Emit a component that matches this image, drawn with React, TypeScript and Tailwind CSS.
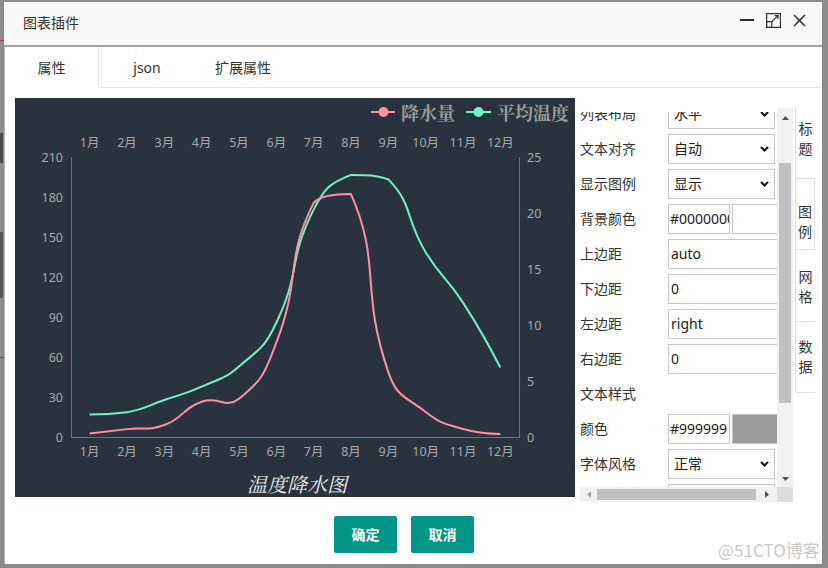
import React from 'react';

type P = [number, number];

const MONTHS = ['1月', '2月', '3月', '4月', '5月', '6月', '7月', '8月', '9月', '10月', '11月', '12月'];
const RAIN = [2.6, 5.9, 9.0, 26.4, 28.7, 70.7, 175.6, 182.2, 48.7, 18.8, 6.0, 2.3];
const TEMP = [2.0, 2.2, 3.3, 4.5, 6.3, 10.2, 20.3, 23.4, 23.0, 16.5, 12.0, 6.2];
const X0 = 71;
const X1 = 519;
const YB = 437;
const YT = 157;
const STEP = (X1 - X0) / 12;
const XS = MONTHS.map((_, i) => X0 + STEP * (i + 0.5));

function smoothPath(pts: P[], smooth = 0.5): string {
  const minX = Math.min(...pts.map((p) => p[0]));
  const maxX = Math.max(...pts.map((p) => p[0]));
  const minY = Math.min(...pts.map((p) => p[1]));
  const maxY = Math.max(...pts.map((p) => p[1]));
  const clamp = (c: P): P => [Math.min(Math.max(c[0], minX), maxX), Math.min(Math.max(c[1], minY), maxY)];
  const f = (n: number) => n.toFixed(2);
  let d = `M${f(pts[0][0])},${f(pts[0][1])}`;
  let cp0: P = [pts[0][0], pts[0][1]];
  for (let i = 1; i < pts.length; i++) {
    const p = pts[i];
    const prev = pts[i - 1];
    const next = pts[i + 1];
    let cp1: P;
    let ratio = 0.5;
    let v: P = [0, 0];
    if (!next) {
      cp1 = [p[0], p[1]];
    } else {
      v = [next[0] - prev[0], next[1] - prev[1]];
      const lp = Math.hypot(p[0] - prev[0], p[1] - prev[1]);
      const ln = Math.hypot(next[0] - p[0], next[1] - p[1]);
      ratio = ln / (ln + lp);
      cp1 = [p[0] - v[0] * smooth * (1 - ratio), p[1] - v[1] * smooth * (1 - ratio)];
    }
    const a = clamp(cp0);
    const b = clamp(cp1);
    d += ` C${f(a[0])},${f(a[1])} ${f(b[0])},${f(b[1])} ${f(p[0])},${f(p[1])}`;
    cp0 = [p[0] + v[0] * smooth * ratio, p[1] + v[1] * smooth * ratio];
  }
  return d;
}

const rainPts: P[] = RAIN.map((v, i) => [XS[i], YB - (v * (YB - YT)) / 210]);
const tempPts: P[] = TEMP.map((v, i) => [XS[i], YB - (v * (YB - YT)) / 25]);

const PINK = '#fe8fa9';
const GREEN = '#78f0c6';
const LABEL = '#a7a7a7';
const AXIS = '#707274';

function Chart() {
  const leftTicks = [0, 30, 60, 90, 120, 150, 180, 210];
  const rightTicks = [0, 5, 10, 15, 20, 25];
  return (
    <div className="w-[560px] h-[399px] shrink-0 bg-[#29333f]">
      <svg width="560" height="399" viewBox="15 98 560 399" style={{ fontFamily: "'Noto Sans','Noto Sans CJK SC',sans-serif" }}>
        {/* legend */}
        <line x1="371" y1="112" x2="395" y2="112" stroke={PINK} strokeWidth="2" />
        <circle cx="383.5" cy="112" r="5" fill={PINK} />
        <text x="401" y="112" dominantBaseline="central" fontSize="18" fontWeight="700" fill="#9c9c9c" style={{ fontFamily: "'Noto Serif CJK SC','Noto Sans CJK SC',serif" }}>
          降水量
        </text>
        <line x1="466" y1="112" x2="491" y2="112" stroke={GREEN} strokeWidth="2" />
        <circle cx="478.5" cy="112" r="5" fill={GREEN} />
        <text x="497" y="112" dominantBaseline="central" fontSize="18" fontWeight="700" fill="#9c9c9c" style={{ fontFamily: "'Noto Serif CJK SC','Noto Sans CJK SC',serif" }}>
          平均温度
        </text>

        {/* axes */}
        <line x1={X0 + 0.5} y1={YT} x2={X0 + 0.5} y2={YB} stroke={AXIS} strokeWidth="1" />
        <line x1={X1 + 0.5} y1={YT} x2={X1 + 0.5} y2={YB} stroke={AXIS} strokeWidth="1" />
        <line x1={X0} y1={YB + 0.5} x2={X1 + 1} y2={YB + 0.5} stroke={AXIS} strokeWidth="1" />

        {leftTicks.map((t) => (
          <text key={'l' + t} x="63" y={YB - (t * (YB - YT)) / 210} textAnchor="end" dominantBaseline="central" fontSize="12.5" fill={LABEL}>
            {t}
          </text>
        ))}
        {rightTicks.map((t) => (
          <text key={'r' + t} x="527" y={YB - (t * (YB - YT)) / 25} textAnchor="start" dominantBaseline="central" fontSize="12.5" fill={LABEL}>
            {t}
          </text>
        ))}
        {MONTHS.map((m, i) => (
          <text key={'t' + m} x={XS[i]} y="142" textAnchor="middle" dominantBaseline="central" fontSize="12.5" fill={LABEL}>
            {m}
          </text>
        ))}
        {MONTHS.map((m, i) => (
          <text key={'b' + m} x={XS[i]} y="451" textAnchor="middle" dominantBaseline="central" fontSize="12.5" fill={LABEL}>
            {m}
          </text>
        ))}

        <path d={smoothPath(tempPts)} fill="none" stroke={GREEN} strokeWidth="2" strokeLinejoin="round" />
        <path d={smoothPath(rainPts)} fill="none" stroke={PINK} strokeWidth="2" strokeLinejoin="round" />

        <text x="297" y="483" textAnchor="middle" dominantBaseline="central" fontSize="20" fontStyle="italic" fill="#ececec" style={{ fontFamily: "'Noto Serif CJK SC','Noto Sans CJK SC',serif" }}>
          温度降水图
        </text>
      </svg>
    </div>
  );
}

function Chevron() {
  return (
    <svg width="9" height="6" viewBox="0 0 9 6" className="shrink-0">
      <polyline points="1,1 4.5,4.5 8,1" fill="none" stroke="#111" strokeWidth="2" />
    </svg>
  );
}

function Sel({ v }: { v: string }) {
  return (
    <div className="w-[107px] h-[30px] shrink-0 border border-[#c8c8c8] bg-white flex items-center justify-between pl-[5px] pr-[5px] text-[14px] text-[#222]">
      <span>{v}</span>
      <Chevron />
    </div>
  );
}

function Inp({ v }: { v: string }) {
  return (
    <div className="w-[130px] h-[30px] shrink-0 border border-[#c8c8c8] bg-white flex items-center pl-[2px] text-[14px] text-[#222] whitespace-nowrap overflow-hidden">
      {v}
    </div>
  );
}

function ColorInp({ v, swatch }: { v: string; swatch: string }) {
  return (
    <div className="flex items-center gap-[2px] shrink-0">
      <div className="w-[62px] h-[30px] border border-[#c8c8c8] bg-white flex items-center pl-[1px] text-[14px] text-[#222] whitespace-nowrap overflow-hidden">
        {v}
      </div>
      <div className="w-[60px] h-[30px] border border-[#c8c8c8]" style={{ backgroundColor: swatch }} />
    </div>
  );
}

function Row({ label, children }: { label: string; children?: React.ReactNode }) {
  return (
    <div className="flex items-center h-[35px]">
      <div className="w-[88px] shrink-0 text-[14px] text-[#333]">{label}</div>
      {children}
    </div>
  );
}

function TriUp({ c }: { c: string }) {
  return (
    <svg width="7" height="4" viewBox="0 0 7 4">
      <polygon points="0,4 7,4 3.5,0" fill={c} />
    </svg>
  );
}
function TriDown({ c }: { c: string }) {
  return (
    <svg width="7" height="4" viewBox="0 0 7 4">
      <polygon points="0,0 7,0 3.5,4" fill={c} />
    </svg>
  );
}
function TriLeft({ c }: { c: string }) {
  return (
    <svg width="4" height="7" viewBox="0 0 4 7">
      <polygon points="4,0 4,7 0,3.5" fill={c} />
    </svg>
  );
}
function TriRight({ c }: { c: string }) {
  return (
    <svg width="4" height="7" viewBox="0 0 4 7">
      <polygon points="0,0 0,7 4,3.5" fill={c} />
    </svg>
  );
}

function Panel() {
  return (
    <div className="w-[220px] h-[404px] shrink-0 bg-white pt-[10px] pl-[5px] pr-[2px]">
      <div className="w-[213px] h-[394px] flex">
        <div className="w-[197px] flex flex-col">
          <div className="h-[379px] pt-[4px]">
            <div className="h-[375px] overflow-hidden">
              <div className="-mt-[16px] w-[260px]">
                <Row label="列表布局"><Sel v="水平" /></Row>
                <Row label="文本对齐"><Sel v="自动" /></Row>
                <Row label="显示图例"><Sel v="显示" /></Row>
                <Row label="背景颜色"><ColorInp v="#0000000" swatch="#ffffff" /></Row>
                <Row label="上边距"><Inp v="auto" /></Row>
                <Row label="下边距"><Inp v="0" /></Row>
                <Row label="左边距"><Inp v="right" /></Row>
                <Row label="右边距"><Inp v="0" /></Row>
                <Row label="文本样式" />
                <Row label="颜色"><ColorInp v="#999999" swatch="#9b9b9b" /></Row>
                <Row label="字体风格"><Sel v="正常" /></Row>
                <Row label="字体粗细"><Sel v="正常" /></Row>
              </div>
            </div>
          </div>
          {/* horizontal scrollbar */}
          <div className="h-[15px] bg-[#f1f1f1] flex items-center">
            <div className="w-[17px] h-full flex items-center justify-center"><TriLeft c="#a3a3a3" /></div>
            <div className="w-[159px] h-[11px] bg-[#c1c1c1]" />
            <div className="flex-1 h-full flex items-center justify-center"><TriRight c="#505050" /></div>
          </div>
        </div>
        {/* vertical scrollbar */}
        <div className="w-[16px] flex flex-col">
          <div className="h-[379px] bg-[#f1f1f1] flex flex-col items-center">
            <div className="h-[17px] w-full flex items-center justify-center pt-[2px]"><TriUp c="#505050" /></div>
            <div className="mt-[38px] w-[12px] h-[240px] bg-[#c1c1c1]" />
            <div className="flex-1" />
            <div className="h-[17px] w-full flex items-center justify-center"><TriDown c="#505050" /></div>
          </div>
          <div className="h-[15px] bg-[#dcdcdc]" />
        </div>
      </div>
    </div>
  );
}

function VTabs() {
  return (
    <div className="w-[20px] shrink-0 pt-[10px] flex flex-col text-[14px] leading-[20px] text-[#333]">
      <div className="h-[70px] border-l border-[#e2e2e2] flex flex-col items-center pt-[11px]">
        <span>标</span>
        <span>题</span>
      </div>
      <div className="h-[72px] border border-[#e2e2e2] bg-white flex flex-col items-center pt-[23px]">
        <span>图</span>
        <span>例</span>
      </div>
      <div className="h-[72px] border-l border-b border-[#e2e2e2] flex flex-col items-center pt-[17px]">
        <span>网</span>
        <span>格</span>
      </div>
      <div className="h-[71px] border-l border-b border-[#e2e2e2] flex flex-col items-center pt-[15px]">
        <span>数</span>
        <span>据</span>
      </div>
    </div>
  );
}

function MaxIcon() {
  return (
    <svg width="15" height="15" viewBox="0 0 15 15" fill="none" stroke="#333" strokeWidth="1.2">
      <rect x="0.6" y="0.6" width="13.8" height="13.8" />
      <rect x="0.6" y="8.6" width="5.2" height="5.8" />
      <line x1="5.8" y1="8.6" x2="12" y2="2.6" />
      <polyline points="8.6,2.6 12,2.6 12,6" />
    </svg>
  );
}

export default function App() {
  return (
    <div className="relative w-[828px] h-[568px] overflow-hidden bg-[#8b8b8b] pt-[2px] pl-[4px] font-['Noto_Sans','Noto_Sans_CJK_SC',sans-serif]">
      {/* fragments of the page behind the overlay */}
      <div className="absolute left-0 top-[40px] w-[4px] h-[1px] bg-[#b03030]" />
      <div className="absolute left-0 top-[357px] w-[4px] h-[1px] bg-[#b03030]" />
      <div className="absolute left-0 top-[133px] w-[3px] h-[30px] bg-[#4a4a4a]" />
      <div className="absolute left-0 top-[232px] w-[3px] h-[66px] bg-[#555]" />

      <div className="w-[818px] h-[562px] bg-white flex flex-col">
        {/* title bar */}
        <div className="h-[45px] shrink-0 bg-[#f8f8f8] border-b-2 border-[#a4a4a4] flex justify-between pl-[19px] pr-[16px]">
          <div className="self-center text-[14px] text-[#333] -mt-[2px]">图表插件</div>
          <div className="flex items-center h-[29px] pt-[7px]">
            <div className="w-[14px] h-[2px] bg-[#2d2d2d]" />
            <div className="ml-[12px]"><MaxIcon /></div>
            <svg className="ml-[12px]" width="13" height="13" viewBox="0 0 13 13" stroke="#333" strokeWidth="1.6">
              <line x1="1" y1="1" x2="12" y2="12" />
              <line x1="12" y1="1" x2="1" y2="12" />
            </svg>
          </div>
        </div>

        {/* body */}
        <div className="flex-1 flex flex-col border-l border-[#b4b4b4]">
          {/* tabs */}
          <div className="flex h-[41px] shrink-0 text-[14px] text-[#333]">
            <div className="w-[94px] border-r border-[#e6e6e6] flex items-center justify-center">属性</div>
            <div className="w-[96px] border-b border-[#e6e6e6] flex items-center justify-center">json</div>
            <div className="w-[96px] border-b border-[#e6e6e6] flex items-center justify-center">扩展属性</div>
            <div className="flex-1 border-b border-[#e6e6e6]" />
          </div>

          {/* content */}
          <div className="flex pt-[10px] pl-[10px]">
            <Chart />
            <Panel />
            <VTabs />
          </div>

          {/* footer */}
          <div className="flex gap-[14px] pt-[14px] pl-[329px]">
            <div className="w-[63px] h-[37px] rounded-[2px] bg-[#009688] text-white text-[14px] font-semibold flex items-center justify-center">确定</div>
            <div className="w-[63px] h-[37px] rounded-[2px] bg-[#009688] text-white text-[14px] font-semibold flex items-center justify-center">取消</div>
          </div>
        </div>
      </div>

      <div className="absolute left-[718px] top-[539px] text-[17px] leading-[22px] text-[#c9c9c9] font-['Noto_Sans_CJK_SC',sans-serif]">@51CTO博客</div>
    </div>
  );
}
